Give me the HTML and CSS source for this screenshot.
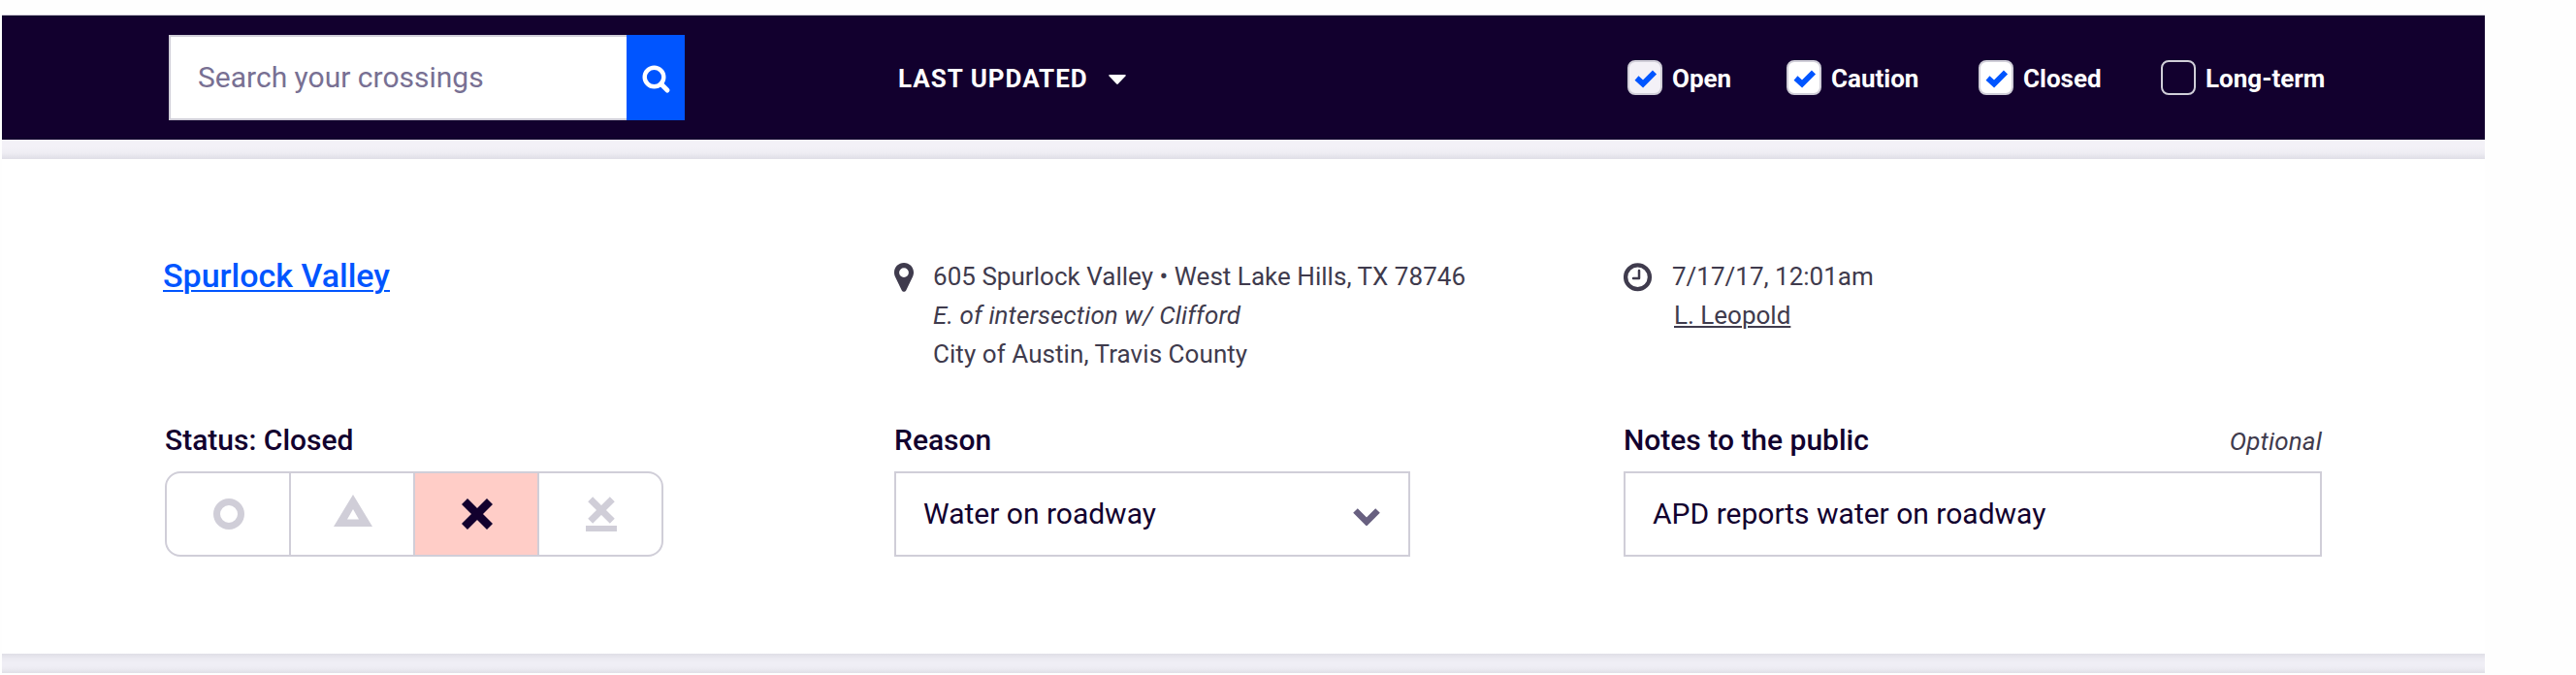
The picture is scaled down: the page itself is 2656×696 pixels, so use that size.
FILE: index.html
```html
<!DOCTYPE html>
<html lang="en">
<head>
<meta charset="utf-8">
<title>Crossings</title>
<link rel="stylesheet" href="styles.css">
</head>
<body>
<main class="page">
  <header class="toolbar">
    <form class="search">
      <input class="search-input" type="text" placeholder="Search your crossings" aria-label="Search your crossings">
      <button class="search-button" type="button" aria-label="Search">
        <svg width="30" height="30" viewBox="0 0 30 30" fill="none" stroke="#fff"><circle cx="12.5" cy="12.5" r="9.8" stroke-width="4.4"/><path d="M19.5 19.5L26 26" stroke-width="5" stroke-linecap="round"/></svg>
      </button>
    </form>
    <div class="sort"><span>LAST UPDATED</span><svg width="18" height="10" viewBox="0 0 18 10" fill="#fff"><path d="M1 0H17Q18.300 .3 17.400 1.400L9.800 9.500Q9 10.300 8.200 9.500L.6 1.400Q-.3 .3 1 0Z"/></svg></div>
    <div class="filters">
      <div class="filter filter-open"><span class="box box-muted"><svg width="24" height="20" viewBox="0 0 24 20"><path class="check" d="M2.500 9.500L9 15.500L21 3.500"/></svg></span><span>Open</span></div>
      <div class="filter filter-caution"><span class="box"><svg width="24" height="20" viewBox="0 0 24 20"><path class="check" d="M2.500 9.500L9 15.500L21 3.500"/></svg></span><span>Caution</span></div>
      <div class="filter filter-closed"><span class="box"><svg width="24" height="20" viewBox="0 0 24 20"><path class="check" d="M2.500 9.500L9 15.500L21 3.500"/></svg></span><span>Closed</span></div>
      <div class="filter"><span class="box box-empty"></span><span>Long-term</span></div>
    </div>
  </header>
  <div class="band band-top"></div>
  <section class="card">
    <div class="row info">
      <h2 class="title"><a class="title-link">Spurlock Valley</a></h2>
      <div class="detail">
        <svg class="pin" width="20" height="30" viewBox="0 0 20 30"><path fill="#3f3b4d" fill-rule="evenodd" d="M10 0C4.400 0 0 4.300 0 9.800C0 11.500 .3 12.700 .8 13.900L7.800 28.400C8.700 30.300 11.300 30.300 12.200 28.400L19.200 13.900C19.700 12.700 20 11.500 20 9.800C20 4.300 15.600 0 10 0ZM10 5.200A4.900 4.900 0 1 1 10 15A4.900 4.900 0 1 1 10 5.200Z"/></svg>
        <div class="lines"><div class="address">605 Spurlock Valley • West Lake Hills, TX 78746</div><div class="hint">E. of intersection w/ Clifford</div><div class="city">City of Austin, Travis County</div></div>
      </div>
      <div class="detail time">
        <svg width="30" height="30" viewBox="0 0 30 30" fill="none" stroke="#3f3b4d"><circle cx="14.500" cy="14.700" r="12.400" stroke-width="4.300"/><path d="M16 8V16H10" stroke-width="2.500" stroke-linecap="round" stroke-linejoin="round"/></svg>
        <div class="lines"><div class="date">7/17/17, 12:01am</div><div class="author"><a class="author-link">L. Leopold</a></div></div>
      </div>
    </div>
    <div class="row fields">
      <div class="field">
        <div class="label"><span class="label-status">Status: Closed</span></div>
        <div class="statuses">
          <span class="status"><svg width="32" height="32" viewBox="0 0 32 32"><circle cx="16" cy="16" r="12.500" fill="none" stroke="#d0ced8" stroke-width="7"/></svg></span>
          <span class="status"><svg class="triangle" width="40" height="33" viewBox="0 0 40 33"><path fill="#d0ced8" fill-rule="evenodd" d="M20 0L40 33H0ZM20 15L14 25.500H26Z"/></svg></span>
          <span class="status status-active"><svg width="32" height="32" viewBox="0 0 32 32"><path d="M3 3L29 29M29 3L3 29" stroke="#12002e" stroke-width="8.500"/></svg></span>
          <span class="status"><svg width="32" height="36" viewBox="0 0 32 36"><path d="M4.700 2.700L27.300 25.300M27.300 2.700L4.700 25.300" stroke="#d0ced8" stroke-width="7"/><path fill="#d0ced8" d="M0 30H32V36H0Z"/></svg></span>
        </div>
      </div>
      <div class="field field-reason">
        <div class="label">Reason</div>
        <div class="control"><span class="reason-value">Water on roadway</span><svg class="chevron" width="28" height="18" viewBox="0 0 28 18"><path d="M2.500 2.500L14 14L25.500 2.500" fill="none" stroke="#686080" stroke-width="6.500"/></svg></div>
      </div>
      <div class="field field-notes">
        <div class="label"><span class="label-notes">Notes to the public</span><em class="optional">Optional</em></div>
        <div class="control"><span class="notes-value">APD reports water on roadway</span></div>
      </div>
    </div>
  </section>
  <div class="band band-bottom"></div>
</main>
</body>
</html>
```
FILE: styles.css
```css
* { box-sizing: border-box; }
body { margin: 0; background: #fefefe; font-family: Roboto, "Liberation Sans", sans-serif; color: #12002e; }
svg { display: block; flex: none; }
.page { width: 2560px; margin-left: 2px; padding-top: 15px; }
.toolbar { display: flex; align-items: center; height: 129px; padding: 1px 0 0 172px; border-top: 1px solid #d0ced8; background: #12002e; color: #fff; }
.search { display: flex; width: 532px; height: 88px; margin-top: -1px; }
.search-input { width: 472px; height: 88px; padding: 0 0 2px 28px; border: 2px solid #d0ced8; border-right: 0; border-radius: 0; background: #fff; font: 400 30px Roboto, sans-serif; outline: none; }
.search-input::placeholder { color: #787093; opacity: 1; }
.search-button { display: flex; width: 60px; height: 88px; padding: 4px 0 0 1px; border: 0; background: #0055ff; align-items: center; justify-content: center; }
.sort { display: flex; align-items: center; gap: 21px; width: 752px; margin-left: 220px; font-weight: 700; font-size: 26px; line-height: 36px; letter-spacing: 1px; }
.sort svg { margin-top: 2px; }
.filters { display: flex; font-weight: 700; font-size: 26px; line-height: 36px; }
.filter { display: flex; align-items: center; gap: 10px; white-space: nowrap; }
.filter-open { width: 164px; }
.filter-caution { width: 198px; }
.filter-closed { width: 188px; }
.box { display: flex; flex: none; align-items: center; justify-content: center; width: 36px; height: 36px; margin-top: -1px; padding: 2px 0 0 1px; border: 2px solid #d0ced8; border-radius: 8px; background: #fff; }
.box-muted { background: #f3f1f7; }
.box-empty { background: transparent; }
.check { fill: none; stroke: #0055ff; stroke-width: 5.8; stroke-linejoin: miter; stroke-linecap: butt; }
.band { height: 20px; }
.band-top { background: linear-gradient(#f3f1f7 0, #f3f1f7 40%, #eeedf3 70%, #dfdee6 100%); }
.band-bottom { background: linear-gradient(#dfdee6 0, #ebeaf1 25%, #efeef5 45%, #efeef5 65%, #ebeaf1 80%, #dfdee6 100%); }
.card { height: 510px; padding: 100px 168px 0 166px; background: #fff; }
.row { display: grid; grid-template-columns: 754px 752px 720px; }
.info { height: 160px; color: #3f3b4d; }
.title { margin: 0; font-weight: 500; font-size: 34px; line-height: 40px; color: #0055ff; }
.title-link { text-decoration: underline; text-decoration-thickness: 2px; text-underline-offset: 3px; }
.detail { display: flex; gap: 20px; padding-top: 7px; }
.lines { margin-top: -6px; font-size: 26px; line-height: 40px; white-space: nowrap; }
.address { letter-spacing: .03px; }
.hint { font-style: italic; letter-spacing: .08px; }
.city { letter-spacing: .06px; }
.author { padding-left: 2px; }
.author-link { text-decoration: underline; text-decoration-thickness: 2px; text-underline-offset: 2px; }
.field:first-child { padding-left: 2px; }
.field-reason { width: 532px; }
.label { display: flex; justify-content: space-between; align-items: baseline; height: 62px; padding-top: 10px; font-weight: 500; font-size: 30px; line-height: 40px; }
.optional { font-weight: 400; font-size: 26px; letter-spacing: .15px; color: #3f3b4d; }
.control { display: flex; align-items: center; justify-content: space-between; height: 88px; padding: 0 29px 2px 28px; border: 2px solid #d0ced8; font-size: 30px; }
.chevron { margin-top: 8px; }
.statuses { display: grid; grid-template-columns: 126px 128px 128px 128px; width: 514px; height: 88px; border: 2px solid #d0ced8; border-radius: 16px; overflow: hidden; }
.status { display: flex; align-items: center; justify-content: center; padding-left: 2px; }
.status + .status { border-left: 2px solid #d0ced8; }
.status-active { background: #ffcdc7; }
.triangle { margin-bottom: 8px; }
```
